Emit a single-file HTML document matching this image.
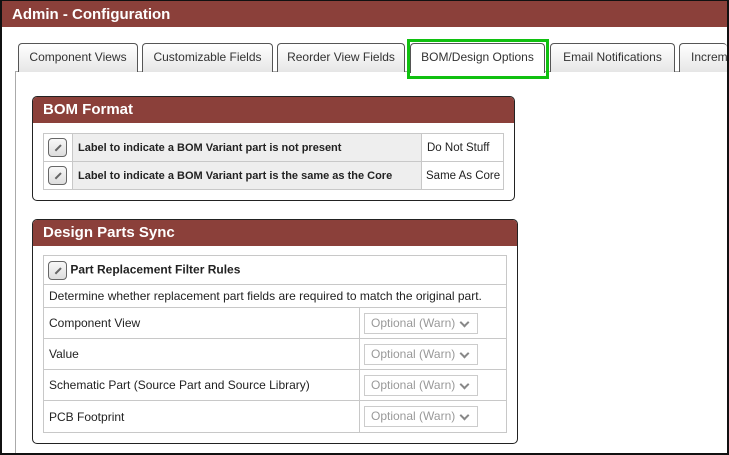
<!DOCTYPE html>
<html><head><style>
*{box-sizing:border-box;margin:0;padding:0}
html,body{width:729px;height:455px;overflow:hidden}
body{background:#fff;font-family:"Liberation Sans",sans-serif;font-size:12px;color:#222;position:relative}
.frame{position:absolute;left:0;top:0;width:729px;height:455px;border-left:2px solid #111;border-right:2px solid #111;border-bottom:2px solid #111;border-top:1px solid #111;z-index:10}
.title{position:absolute;left:2px;top:1px;width:725px;height:26px;background:#8b403a;color:#fff;font-weight:bold;font-size:15px;padding:5px 10px}
.tab{position:absolute;top:43px;height:29px;border:1px solid #555;border-bottom:none;border-radius:4px 4px 0 0;background:linear-gradient(#fff,#e6e6e6);text-align:center;line-height:27px;font-size:12px;color:#333;white-space:nowrap;overflow:hidden}
.panel{position:absolute;left:15px;top:71px;width:712px;height:382px;border-left:1px solid #aaa;border-top:1px solid #aaa}
.box{position:absolute;border:1px solid #222;border-radius:5px;overflow:hidden;background:#fff}
.box .h{background:#8b403a;color:#fff;font-weight:bold;font-size:15px;height:26px;padding:4px 10px}
table{border-collapse:collapse;position:absolute}
td{border:1px solid #c8c8c8;padding:0 5px;font-size:12px;white-space:nowrap}
.ic{display:inline-block;width:19px;height:19px;border:1px solid #666;border-radius:4px;background:linear-gradient(#f8f8f8,#ddd);vertical-align:middle;position:relative}
.ic:after{content:"";position:absolute;left:5px;top:8px;width:8px;height:1.5px;background:#666;transform:rotate(-45deg)}
.sel{display:inline-block;width:114px;height:21px;border:1px solid #ccc;color:#999;line-height:19px;padding-left:6px;position:relative}
.sel:after{content:"";position:absolute;right:9px;top:5px;width:5px;height:5px;border-right:2px solid #888;border-bottom:2px solid #888;transform:rotate(45deg)}
</style></head><body>
<div class="frame"></div>
<div class="title">Admin - Configuration</div>
<div class="panel"></div>
<div class="tab" style="left:18px;width:120px">Component Views</div>
<div class="tab" style="left:142px;width:131px">Customizable Fields</div>
<div class="tab" style="left:277px;width:128px">Reorder View Fields</div>
<div class="tab" style="left:410px;width:135px;background:#fff;height:30px">BOM/Design Options</div>
<div style="position:absolute;left:407px;top:39px;width:142px;height:40px;border:3px solid #10c010"></div>
<div class="tab" style="left:550px;width:125px">Email Notifications</div>
<div class="tab" style="left:679px;width:48px;text-align:left;padding-left:11px;border-right:none">Increm</div>

<div class="box" style="left:32px;top:96px;width:483px;height:105px"><div class="h">BOM Format</div></div>
<table style="left:43px;top:133px;width:460px;table-layout:fixed">
<tr style="height:28px"><td style="width:29px;background:#fff;padding:0 4px"><span class="ic"></span></td><td style="width:349px;background:#eee;font-weight:bold;font-size:11px">Label to indicate a BOM Variant part is not present</td><td style="width:82px;font-size:11.5px">Do Not Stuff</td></tr>
<tr style="height:28px"><td style="background:#fff;padding:0 4px"><span class="ic"></span></td><td style="background:#eee;font-weight:bold;font-size:11px">Label to indicate a BOM Variant part is the same as the Core</td><td style="font-size:11.5px;padding:0 4px">Same As Core</td></tr>
</table>

<div class="box" style="left:32px;top:219px;width:486px;height:225px"><div class="h">Design Parts Sync</div></div>
<table style="left:43px;top:255px;width:464px">
<tr style="height:29px"><td colspan="2" style="font-weight:bold;padding-left:4px"><span class="ic"></span> Part Replacement Filter Rules</td></tr>
<tr style="height:23px"><td colspan="2">Determine whether replacement part fields are required to match the original part.</td></tr>
<tr style="height:31px"><td>Component View</td><td style="width:147px;padding-left:4px"><span class="sel">Optional (Warn)</span></td></tr>
<tr style="height:31px"><td>Value</td><td style="padding-left:4px"><span class="sel">Optional (Warn)</span></td></tr>
<tr style="height:31px"><td>Schematic Part (Source Part and Source Library)</td><td style="padding-left:4px"><span class="sel">Optional (Warn)</span></td></tr>
<tr style="height:32px"><td>PCB Footprint</td><td style="padding-left:4px"><span class="sel">Optional (Warn)</span></td></tr>
</table>
</body></html>
